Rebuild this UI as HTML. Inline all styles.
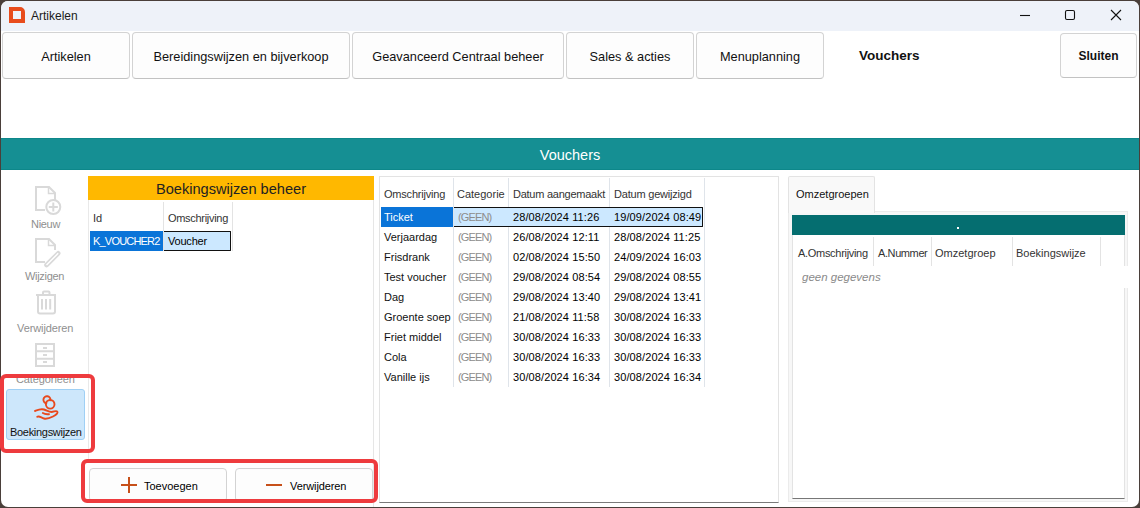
<!DOCTYPE html>
<html><head><meta charset="utf-8">
<style>
*{margin:0;padding:0;box-sizing:border-box}
html,body{width:1140px;height:508px;overflow:hidden;background:#4a3f3a}
body{font-family:"Liberation Sans",sans-serif;font-size:11px;color:#000;position:relative}
.a{position:absolute}
#win{position:absolute;left:1px;top:1px;width:1138px;height:506px;background:#fff;border-radius:7px}
#title{position:absolute;left:1px;top:1px;width:1138px;height:30px;background:#eef2f9;border-radius:7px 7px 0 0}
.tb{position:absolute;top:32px;height:47px;border:1px solid #d3d3d3;border-bottom-color:#c2c2c2;border-radius:4px;background:#fdfdfd;text-align:center;line-height:47px;font-size:12.75px;color:#111}
.t{position:absolute;white-space:nowrap;line-height:14px;font-size:11px}
.g{color:#8f8f8f}
.ge{color:#8c8c8c;letter-spacing:-0.85px}
.hd{color:#333}
.dt{letter-spacing:0.1px}
.vl{position:absolute;width:1px;background:#e3e3e3}
.hl{position:absolute;height:1px;background:#e3e3e3}
.btn{position:absolute;border:1px solid #d3d3d3;border-radius:4px;background:#fdfdfd}
.red{position:absolute;border:4px solid #ee3b3e;border-radius:6px}
</style></head><body>
<div id="win"></div>
<div id="title"></div>
<svg class="a" style="left:9px;top:7px" width="16" height="16" viewBox="0 0 16 16"><path d="M0 0H11A5 5 0 0 1 16 5V16H0Z M4 4V12H12V4Z" fill="#e84c1c" fill-rule="evenodd"/></svg>
<div class="t" style="left:31px;top:9px;font-size:12px;color:#1a1a1a">Artikelen</div>
<svg class="a" style="left:1000px;top:0" width="140" height="31">
  <line x1="20" y1="15.5" x2="30" y2="15.5" stroke="#111" stroke-width="1.1"/>
  <rect x="65.5" y="10.5" width="9" height="9" rx="1.5" fill="none" stroke="#111" stroke-width="1.1"/>
  <path d="M111 10L121 20M121 10L111 20" stroke="#111" stroke-width="1.1"/>
</svg>

<div class="tb" style="left:2px;width:128px">Artikelen</div>
<div class="tb" style="left:132px;width:218px">Bereidingswijzen en bijverkoop</div>
<div class="tb" style="left:352px;width:212px">Geavanceerd Centraal beheer</div>
<div class="tb" style="left:566px;width:128px">Sales &amp; acties</div>
<div class="tb" style="left:696px;width:128px">Menuplanning</div>
<div class="t" style="left:859px;top:49px;font-size:13.5px;font-weight:bold;color:#111">Vouchers</div>
<div class="tb" style="left:1060px;top:33px;width:77px;height:45px;line-height:45px;font-weight:bold;font-size:12px">Sluiten</div>

<div class="a" style="left:1px;top:138px;width:1138px;height:32px;background:#158f93;border-top:1px solid #0d878a;border-bottom:1px solid #0d878a;color:#fff;text-align:center;line-height:32px;font-size:14.5px">Vouchers</div>

<!-- LEFT TOOLBAR -->
<div class="vl" style="left:88px;top:200px;height:259px;background:#e9e9e9"></div>
<svg class="a" style="left:0;top:170px" width="88" height="240">
  <g fill="none" stroke="#d9d9d9" stroke-width="2">
    <path d="M45 40H36V17H49L55 23V30"/>
    <path d="M48.5 17V23.5H55" stroke-width="1.5"/>
    <circle cx="53.3" cy="37" r="7"/>
    <path d="M53.3 32.5V41.5M48.8 37H57.8" stroke-width="2"/>
    <path d="M45 92H36V69H49L55 75V80"/>
    <path d="M48.5 69V75.5H55" stroke-width="1.5"/>
    <path d="M58.2 83.3L46.5 95" stroke-width="4.6" stroke-linecap="round"/>
    <path d="M58.2 83.3L46.5 95" stroke="#fff" stroke-width="1.4" stroke-linecap="butt"/>
    <path d="M36 125H56M43 124.5V122.5Q43 121.5 44 121.5H48.5Q49.5 121.5 49.5 122.5V124.5M38 125V141.5Q38 143.5 40 143.5H53Q55 143.5 55 141.5V125M42 129V139.5M46 129V139.5M50.2 129V139.5"/>
    <path d="M36 174H54V196H36Z M36 181.3H54M36 188.7H54M43 178H47M43 185H47M43 192H47"/>
  </g>
</svg>
<div class="t g" style="left:31px;top:217px;letter-spacing:-0.3px">Nieuw</div>
<div class="t g" style="left:25px;top:269px;letter-spacing:-0.3px">Wijzigen</div>
<div class="t g" style="left:17px;top:321px;letter-spacing:-0.1px">Verwijderen</div>
<div class="t g" style="left:16px;top:372px;letter-spacing:-0.1px">Categorieen</div>
<div class="a" style="left:6px;top:389px;width:79px;height:51px;background:#cde7fb;border:1px solid #9fd0f5;border-radius:3px"></div>
<svg class="a" style="left:28px;top:390px" width="36" height="36">
  <g fill="none" stroke="#e8491d" stroke-width="1.9" stroke-linecap="round" stroke-linejoin="round">
    <path d="M18.4 13.2A3.5 3.5 0 1 1 22.4 10.2"/>
    <circle cx="22.2" cy="14.3" r="4.3"/>
    <path d="M7 21C9.5 20 12.5 18.5 16 19.5C19 20.5 21 22 23.5 22C26 22 28 20.2 29.3 21.6C30.3 23 28 25 25 26.5C22 28 19 29.5 16 28.5C13 27.5 11 25.5 9.3 26.8"/>
    <path d="M14.8 23C16.3 24 18.3 24.6 21 24.2"/>
  </g>
</svg>
<div class="t" style="left:10px;top:425px;color:#111;letter-spacing:-0.3px">Boekingswijzen</div>
<div class="red" style="left:0;top:374px;width:95px;height:79px"></div>

<!-- LEFT PANEL -->
<div class="a" style="left:88px;top:176px;width:286px;height:24px;background:#ffb800;text-align:center;line-height:26px;font-size:14.6px;color:#222">Boekingswijzen beheer</div>
<div class="vl" style="left:373px;top:200px;height:307px;background:#e6e6e6"></div>
<div class="vl" style="left:163px;top:202px;height:49px"></div>
<div class="vl" style="left:232px;top:202px;height:49px"></div>
<div class="t hd" style="left:93px;top:211px">Id</div>
<div class="t hd" style="left:168px;top:211px;letter-spacing:-0.3px">Omschrijving</div>
<div class="a" style="left:90px;top:231px;width:73px;height:20px;background:#0a74d8"></div>
<div class="a" style="left:164px;top:231px;width:67px;height:20px;background:#cce8ff;border:1px solid #111;border-left:none;border-radius:0 1px 1px 0"></div>
<div class="t" style="left:93px;top:234px;color:#fff;letter-spacing:-0.8px">K_VOUCHER2</div>
<div class="t" style="left:168px;top:234px;letter-spacing:-0.2px">Voucher</div>

<!-- buttons -->
<div class="btn" style="left:89px;top:468px;width:138px;height:34px"></div>
<div class="btn" style="left:235px;top:468px;width:138px;height:34px"></div>
<svg class="a" style="left:120px;top:475px" width="20" height="20"><path d="M9 2V18M1 10H17" stroke="#c7501a" stroke-width="2"/></svg>
<div class="t" style="left:144px;top:479px">Toevoegen</div>
<svg class="a" style="left:265px;top:475px" width="20" height="20"><path d="M1 10H17" stroke="#c7501a" stroke-width="2"/></svg>
<div class="t" style="left:290px;top:479px;letter-spacing:-0.1px">Verwijderen</div>
<div class="red" style="left:81px;top:459px;width:297px;height:44px"></div>

<!-- MIDDLE GRID -->
<div class="a" style="left:379px;top:176px;width:400px;height:327px;border:1px solid #e3e3e3;border-bottom:1px solid #7a7a7a"></div>
<div class="vl" style="left:453px;top:178px;height:209px;background:#dfe4ea"></div>
<div class="vl" style="left:508px;top:178px;height:209px;background:#dfe4ea"></div>
<div class="vl" style="left:609px;top:178px;height:209px;background:#dfe4ea"></div>
<div class="vl" style="left:704px;top:178px;height:209px;background:#dfe4ea"></div>
<div class="t hd" style="left:384px;top:187px;letter-spacing:-0.2px">Omschrijving</div>
<div class="t hd" style="left:457px;top:187px">Categorie</div>
<div class="t hd" style="left:513px;top:187px;letter-spacing:-0.25px">Datum aangemaakt</div>
<div class="t hd" style="left:614px;top:187px;letter-spacing:-0.2px">Datum gewijzigd</div>
<div class="a" style="left:381px;top:207px;width:72px;height:20px;background:#0a74d8"></div>
<div class="a" style="left:454px;top:207px;width:249px;height:20px;background:#cce8ff;border:1px solid #111;border-left:none;border-radius:0 1px 1px 0"></div>
<div id="rows">
<div class="t" style="left:384px;top:210px;color:#fff">Ticket</div>
<div class="t ge" style="left:458px;top:210px">(GEEN)</div>
<div class="t dt" style="left:513px;top:210px">28/08/2024 11:26</div>
<div class="t dt" style="left:614px;top:210px">19/09/2024 08:49</div>
<div class="t" style="left:384px;top:230px;color:#111">Verjaardag</div>
<div class="t ge" style="left:458px;top:230px">(GEEN)</div>
<div class="t dt" style="left:513px;top:230px">26/08/2024 12:11</div>
<div class="t dt" style="left:614px;top:230px">28/08/2024 11:25</div>
<div class="t" style="left:384px;top:250px;color:#111">Frisdrank</div>
<div class="t ge" style="left:458px;top:250px">(GEEN)</div>
<div class="t dt" style="left:513px;top:250px">02/08/2024 15:50</div>
<div class="t dt" style="left:614px;top:250px">24/09/2024 16:03</div>
<div class="t" style="left:384px;top:270px;color:#111">Test voucher</div>
<div class="t ge" style="left:458px;top:270px">(GEEN)</div>
<div class="t dt" style="left:513px;top:270px">29/08/2024 08:54</div>
<div class="t dt" style="left:614px;top:270px">29/08/2024 08:55</div>
<div class="t" style="left:384px;top:290px;color:#111">Dag</div>
<div class="t ge" style="left:458px;top:290px">(GEEN)</div>
<div class="t dt" style="left:513px;top:290px">29/08/2024 13:40</div>
<div class="t dt" style="left:614px;top:290px">29/08/2024 13:41</div>
<div class="t" style="left:384px;top:310px;color:#111">Groente soep</div>
<div class="t ge" style="left:458px;top:310px">(GEEN)</div>
<div class="t dt" style="left:513px;top:310px">21/08/2024 11:58</div>
<div class="t dt" style="left:614px;top:310px">30/08/2024 16:33</div>
<div class="t" style="left:384px;top:330px;color:#111">Friet middel</div>
<div class="t ge" style="left:458px;top:330px">(GEEN)</div>
<div class="t dt" style="left:513px;top:330px">30/08/2024 16:33</div>
<div class="t dt" style="left:614px;top:330px">30/08/2024 16:33</div>
<div class="t" style="left:384px;top:350px;color:#111">Cola</div>
<div class="t ge" style="left:458px;top:350px">(GEEN)</div>
<div class="t dt" style="left:513px;top:350px">30/08/2024 16:33</div>
<div class="t dt" style="left:614px;top:350px">30/08/2024 16:33</div>
<div class="t" style="left:384px;top:370px;color:#111">Vanille ijs</div>
<div class="t ge" style="left:458px;top:370px">(GEEN)</div>
<div class="t dt" style="left:513px;top:370px">30/08/2024 16:34</div>
<div class="t dt" style="left:614px;top:370px">30/08/2024 16:34</div>
</div>

<!-- RIGHT PANEL -->
<div class="a" style="left:788px;top:211px;width:340px;height:291px;background:#f7f7f7;border:1px solid #ebebeb"></div>
<div class="a" style="left:788px;top:176px;width:87px;height:37px;background:#f9f9f9;border:1px solid #e3e3e3;border-bottom:none;border-radius:2px 2px 0 0"></div>
<div class="t" style="left:796px;top:187px;color:#111">Omzetgroepen</div>
<div class="a" style="left:792px;top:235px;width:333px;height:264px;background:#fff;border:1px solid #e3e3e3;border-top:none;border-bottom:1px solid #777"></div>
<div class="a" style="left:792px;top:215px;width:333px;height:20px;background:#056e70"></div>
<div class="a" style="left:957px;top:227px;width:2px;height:2px;background:#fff"></div>
<div class="vl" style="left:873px;top:237px;height:29px"></div>
<div class="vl" style="left:931px;top:237px;height:29px"></div>
<div class="vl" style="left:1012px;top:237px;height:29px"></div>
<div class="vl" style="left:1100px;top:237px;height:29px"></div>
<div class="t hd" style="left:798px;top:246px;letter-spacing:-0.3px">A.Omschrijving</div>
<div class="t hd" style="left:878px;top:246px;letter-spacing:-0.4px">A.Nummer</div>
<div class="t hd" style="left:935px;top:246px">Omzetgroep</div>
<div class="t hd" style="left:1016px;top:246px">Boekingswijze</div>
<div class="a" style="left:793px;top:266px;width:343px;height:22px;background:#fff"></div>
<div class="t" style="left:802px;top:270px;color:#8a8a8a;font-style:italic;font-size:11.5px">geen gegevens</div>
</body></html>
